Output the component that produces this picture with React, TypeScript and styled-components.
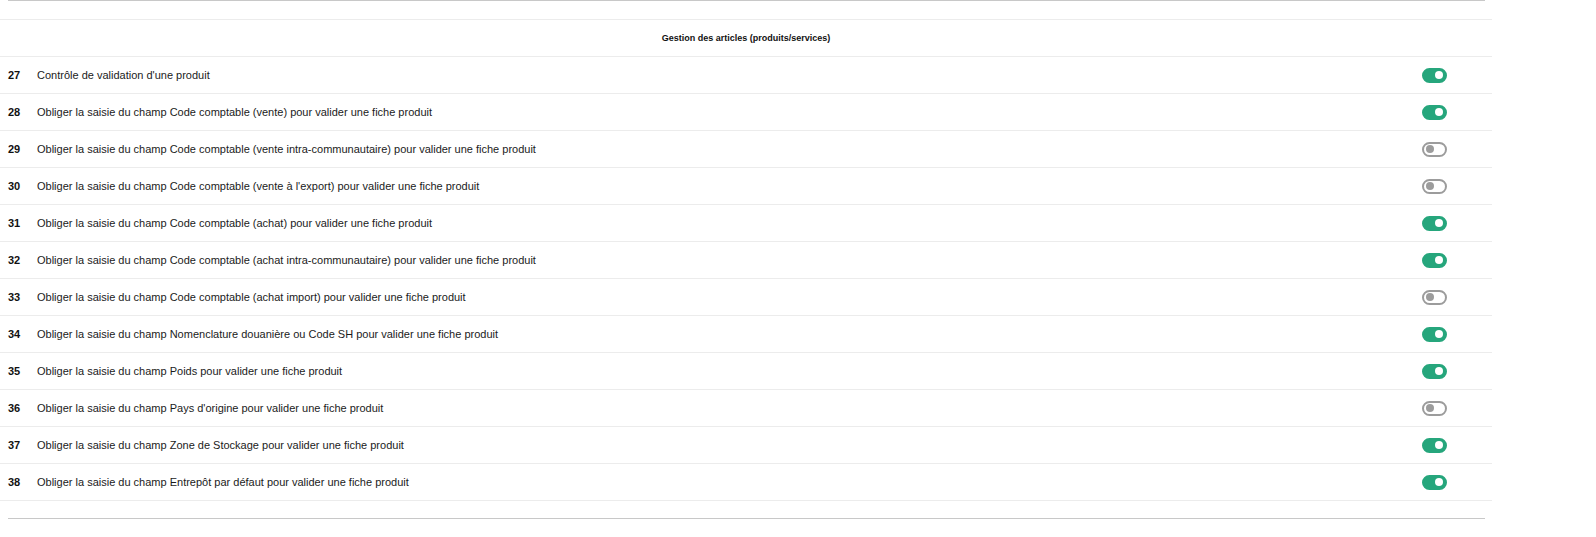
import styled, { createGlobalStyle } from "styled-components";

const GlobalStyle = createGlobalStyle`
  html, body {
    margin: 0;
    padding: 0;
    background: #ffffff;
  }

  body {
    font-family: "Liberation Sans", Arial, sans-serif;
    color: #1b1b1b;
  }
`;

const Page = styled.div`
  width: 1492px;
`;

const Rule = styled.hr`
  margin: 0 7px 0 8px;
  border: none;
  height: 1px;

  background-color: #c8c8c8;
`;

const Table = styled.div`
  display: flex;
  flex-direction: column;

  margin: 18px 0 17px;
  border-top: 1px solid #ececec;
`;

const HeaderRow = styled.div`
  display: flex;
  align-items: center;
  justify-content: center;

  height: 36px;
  border-bottom: 1px solid #ececec;

  font-size: 9px;
  font-weight: 700;
  color: #111111;
`;

const Row = styled.div`
  display: flex;
  align-items: center;

  height: 36px;
  border-bottom: 1px solid #ececec;

  font-size: 11px;
`;

const Num = styled.div`
  width: 29px;
  padding-left: 8px;

  font-weight: 700;
  color: #111111;
`;

const Label = styled.div`
  flex: 1;
  color: #1b1b1b;
`;

const Switch = styled.span<{ $on: boolean }>`
  position: relative;
  display: block;
  box-sizing: border-box;

  width: 25px;
  height: 15px;
  margin-right: 45px;
  border-radius: 8px;
  border: 2px solid ${({ $on }) => ($on ? "#26a67c" : "#9c9c9c")};

  background-color: ${({ $on }) => ($on ? "#26a67c" : "#ffffff")};

  &::after {
    content: "";
    position: absolute;
    top: 1.5px;
    left: ${({ $on }) => ($on ? "11px" : "2px")};

    width: 8px;
    height: 8px;
    border-radius: 50%;

    background-color: ${({ $on }) => ($on ? "#ffffff" : "#9c9c9c")};
  }
`;

const rows = [
  { id: 27, label: "Contrôle de validation d'une produit", on: true },
  { id: 28, label: "Obliger la saisie du champ Code comptable (vente) pour valider une fiche produit", on: true },
  { id: 29, label: "Obliger la saisie du champ Code comptable (vente intra-communautaire) pour valider une fiche produit", on: false },
  { id: 30, label: "Obliger la saisie du champ Code comptable (vente à l'export) pour valider une fiche produit", on: false },
  { id: 31, label: "Obliger la saisie du champ Code comptable (achat) pour valider une fiche produit", on: true },
  { id: 32, label: "Obliger la saisie du champ Code comptable (achat intra-communautaire) pour valider une fiche produit", on: true },
  { id: 33, label: "Obliger la saisie du champ Code comptable (achat import) pour valider une fiche produit", on: false },
  { id: 34, label: "Obliger la saisie du champ Nomenclature douanière ou Code SH pour valider une fiche produit", on: true },
  { id: 35, label: "Obliger la saisie du champ Poids pour valider une fiche produit", on: true },
  { id: 36, label: "Obliger la saisie du champ Pays d'origine pour valider une fiche produit", on: false },
  { id: 37, label: "Obliger la saisie du champ Zone de Stockage pour valider une fiche produit", on: true },
  { id: 38, label: "Obliger la saisie du champ Entrepôt par défaut pour valider une fiche produit", on: true },
];

export default function App() {
  return (
    <Page>
      <GlobalStyle />
      <Rule />
      <Table>
        <HeaderRow>Gestion des articles (produits/services)</HeaderRow>
        {rows.map((row) => (
          <Row key={row.id}>
            <Num>{row.id}</Num>
            <Label>{row.label}</Label>
            <Switch role="switch" aria-checked={row.on} $on={row.on} />
          </Row>
        ))}
      </Table>
      <Rule />
    </Page>
  );
}
